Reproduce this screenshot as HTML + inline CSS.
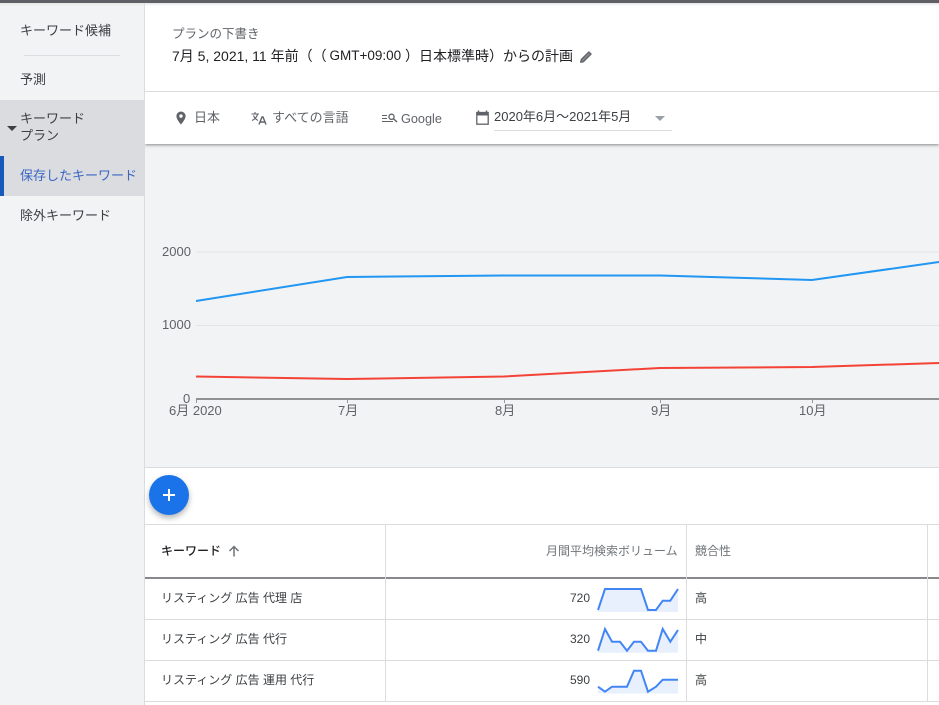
<!DOCTYPE html>
<html lang="ja">
<head>
<meta charset="utf-8">
<style>
html,body{margin:0;padding:0}
body{width:939px;height:705px;overflow:hidden;position:relative;background:#f1f3f4;font-family:"Liberation Sans","Noto Sans CJK JP",sans-serif;color:#3c4043;text-spacing-trim:space-all}
.t{position:absolute;white-space:nowrap;font-size:13px;line-height:18px}
.b{position:absolute}
svg{position:absolute;overflow:visible}
</style>
</head>
<body>
<div class="b" style="left:145px;top:0;width:794px;height:144px;background:#fff;box-shadow:0 1px 3px rgba(60,64,67,.6);clip-path:inset(0 0 -6px 0)"></div>
<div class="b" style="left:144px;top:0;width:1px;height:705px;background:#dadce0"></div>
<div class="b" style="left:0;top:0;width:939px;height:3px;background:#5f6065"></div>
<div class="b" style="left:0;top:3px;width:939px;height:3px;background:linear-gradient(#e4e4e4,rgba(255,255,255,0))"></div>

<!-- Sidebar -->
<div class="b" style="left:0;top:100px;width:144px;height:96px;background:#dadce0"></div>
<div class="b" style="left:0;top:156px;width:4px;height:40px;background:#185abc"></div>
<div class="b" style="left:24px;top:55px;width:96px;height:1px;background:#dadce0"></div>
<div class="t" style="left:20px;top:22px">キーワード候補</div>
<div class="t" style="left:20px;top:71px">予測</div>
<div class="t" style="left:20px;top:110px;line-height:17px">キーワード<br>プラン</div>
<svg style="left:7px;top:126px" width="10" height="6"><path d="M0 0H10L5 5Z" fill="#3c4043"/></svg>
<div class="t" style="left:20px;top:167px;color:#3b66c4">保存したキーワード</div>
<div class="t" style="left:20px;top:207px">除外キーワード</div>

<!-- Header -->
<div class="t" style="left:172px;top:25px;font-size:12.500px;color:#5f6368">プランの下書き</div>
<div class="t" style="left:172px;top:47px;font-size:14px;color:#202124">7月 5, 2021, 11 年前（（</div>
<div class="t" style="left:329.500px;top:47px;font-size:13.500px;color:#202124">GMT+09:00</div>
<div class="t" style="left:405px;top:47px;font-size:14px;color:#202124">）日本標準時）からの計画</div>
<svg style="left:579px;top:50px" width="14" height="14" viewBox="0 0 14 14"><path d="M1.700 12.300l.6-2.800L9.900 1.900 12.100 4.100 4.500 11.700z" fill="#85888c" stroke="#5f6368" stroke-width="1.300" stroke-linejoin="round"/></svg>
<div class="b" style="left:145px;top:91px;width:794px;height:1px;background:#dadce0"></div>

<svg style="left:175px;top:111px" width="12" height="14" viewBox="0 0 12 14"><path fill-rule="evenodd" d="M6 .5A4.600 4.600 0 0 0 1.400 5.100C1.400 8.300 6 13.500 6 13.500S10.600 8.300 10.600 5.100A4.600 4.600 0 0 0 6 .5ZM6 3.400A1.700 1.700 0 1 1 6 6.800 1.700 1.700 0 0 1 6 3.400Z" fill="#5f6368"/></svg>
<div class="t" style="left:194px;top:109px;color:#5f6368">日本</div>

<svg style="left:251px;top:111px" width="16" height="14" viewBox="0 0 16 14"><path d="M.5 3H8M4 1V3M6.500 3C6 6 3.500 8.500 1 9.500M2.500 4.500C3.500 7 5 8.500 7 9.500" fill="none" stroke="#5f6368" stroke-width="1.100"/><path d="M8 13.500L11 6H12L15 13.500M9.200 11H13.800" fill="none" stroke="#5f6368" stroke-width="1.400"/></svg>
<div class="t" style="left:272px;top:109px;color:#5f6368">すべての言語</div>

<svg style="left:382px;top:113px" width="16" height="10" viewBox="0 0 16 10"><path d="M0 2.500H5M0 5.500H5M0 8.500H11" stroke="#5f6368" stroke-width="1.100" fill="none"/><circle cx="9.500" cy="3.800" r="2.600" fill="none" stroke="#5f6368" stroke-width="1.300"/><path d="M11.500 5.800L15 9" stroke="#5f6368" stroke-width="1.400"/></svg>
<div class="t" style="left:401px;top:110px;font-size:12.700px;color:#5f6368">Google</div>

<svg style="left:476px;top:110px" width="13" height="15" viewBox="0 0 13 15"><path d="M2.500 .5V3M10.500 .5V3" stroke="#5f6368" stroke-width="1.500"/><rect x=".8" y="2.500" width="11.400" height="11.700" fill="none" stroke="#5f6368" stroke-width="1.300"/><rect x=".8" y="2.500" width="11.400" height="3" fill="#5f6368"/></svg>
<div class="t" style="left:494px;top:108px;font-size:13px;color:#3c4043">2020年6月～2021年5月</div>
<svg style="left:655px;top:116px" width="10" height="6"><path d="M0 0H10L5 5Z" fill="#9aa0a6"/></svg>
<div class="b" style="left:494px;top:130px;width:178px;height:1px;background:#dadce0"></div>

<!-- Chart -->
<svg style="left:0;top:0" width="939" height="470">
<path d="M196 252H939M196 325.500H939" stroke="#e3e4e6" stroke-width="1" fill="none"/>
<path d="M196 399H939" stroke="#919191" stroke-width="2" fill="none"/>
<path d="M196.500 399V403M347.500 399V403M504.500 399V403M660.500 399V403M812.500 399V403" stroke="#999" stroke-width="1"/>
<path d="M196 301L347 277 504 275.500 660 275.500 812 280 939 262" fill="none" stroke="#2196f3" stroke-width="2"/>
<path d="M196 376.500L347 379 504 376.500 660 368 812 367 939 363" fill="none" stroke="#f44336" stroke-width="2"/>
</svg>
<div class="t" style="left:162px;top:243px;color:#5f6368">2000</div>
<div class="t" style="left:162px;top:316px;color:#5f6368">1000</div>
<div class="t" style="left:183px;top:390px;color:#5f6368">0</div>
<div class="t" style="left:169px;top:402px;font-size:13px;color:#5f6368">6月 2020</div>
<div class="t" style="left:338px;top:402px;font-size:13px;color:#5f6368">7月</div>
<div class="t" style="left:495px;top:402px;font-size:13px;color:#5f6368">8月</div>
<div class="t" style="left:651px;top:402px;font-size:13px;color:#5f6368">9月</div>
<div class="t" style="left:799px;top:402px;font-size:13px;color:#5f6368">10月</div>

<!-- Table area -->
<div class="b" style="left:145px;top:467px;width:794px;height:238px;background:#fff;border-top:1px solid #dadce0;box-sizing:border-box"></div>
<div class="b" style="left:145px;top:524px;width:794px;height:1px;background:#dadce0"></div>
<div class="b" style="left:145px;top:577px;width:794px;height:2px;background:#88898c"></div>
<div class="b" style="left:145px;top:619px;width:794px;height:1px;background:#dadce0"></div>
<div class="b" style="left:145px;top:660px;width:794px;height:1px;background:#dadce0"></div>
<div class="b" style="left:145px;top:701px;width:794px;height:1px;background:#dadce0"></div>
<div class="b" style="left:385px;top:525px;width:1px;height:176px;background:#dadce0"></div>
<div class="b" style="left:686px;top:525px;width:1px;height:176px;background:#dadce0"></div>
<div class="b" style="left:927px;top:525px;width:1px;height:176px;background:#dadce0"></div>

<div class="b" style="left:149px;top:475px;width:40px;height:40px;border-radius:50%;background:#1a73e8;box-shadow:0 3px 6px rgba(60,64,67,.4)"></div>
<svg style="left:162px;top:488px" width="14" height="14"><path d="M7 1V13M1 7H13" stroke="#fff" stroke-width="2"/></svg>

<div class="t" style="left:161px;top:542px;font-size:12px;font-weight:500;color:#202124">キーワード</div>
<svg style="left:228px;top:545px" width="12" height="12" viewBox="0 0 12 12"><path d="M6 11.500V1.500M1.500 6L6 1.500 10.500 6" fill="none" stroke="#6f7276" stroke-width="1.500"/></svg>
<div class="t" style="left:546px;top:542px;font-size:12px;color:#70757a">月間平均検索ボリューム</div>
<div class="t" style="left:695px;top:542px;font-size:12px;color:#70757a">競合性</div>

<div class="t" style="left:161px;top:589px;font-size:12px;color:#3c4043">リスティング 広告 代理 店</div>
<div class="t" style="left:161px;top:630px;font-size:12px;color:#3c4043">リスティング 広告 代行</div>
<div class="t" style="left:161px;top:671px;font-size:12px;color:#3c4043">リスティング 広告 運用 代行</div>

<div class="t" style="left:570px;top:589px;font-size:12px;color:#3c4043">720</div>
<div class="t" style="left:570px;top:630px;font-size:12px;color:#3c4043">320</div>
<div class="t" style="left:570px;top:671px;font-size:12px;color:#3c4043">590</div>

<svg style="left:0;top:0" width="939" height="705">
<path d="M598 610L605 589 641 589 648 610 656 610 662.700 600.700 670.300 600.700 678 589V612H598Z" fill="#e8f0fe"/>
<path d="M598 610L605 589 641 589 648 610 656 610 662.700 600.700 670.300 600.700 678 589" fill="none" stroke="#4285f4" stroke-width="2"/>
<path d="M598 650.700L605 629 612 641.700 620 641.700 627 650.700 634 641.700 641 641.700 648 650.700 656 650.700 662.700 629 670.300 641.700 678 630V652.700H598Z" fill="#e8f0fe"/>
<path d="M598 650.700L605 629 612 641.700 620 641.700 627 650.700 634 641.700 641 641.700 648 650.700 656 650.700 662.700 629 670.300 641.700 678 630" fill="none" stroke="#4285f4" stroke-width="2"/>
<path d="M598 686.700L605 691.700 612 686.700 620 686.700 627 686.700 634 670.700 641 670.700 648 691.700 656 686.700 662.700 679.700 670.300 679.700 678 679.700V693.500H598Z" fill="#e8f0fe"/>
<path d="M598 686.700L605 691.700 612 686.700 620 686.700 627 686.700 634 670.700 641 670.700 648 691.700 656 686.700 662.700 679.700 670.300 679.700 678 679.700" fill="none" stroke="#4285f4" stroke-width="2"/>
</svg>

<div class="t" style="left:695px;top:589px;font-size:12px;color:#3c4043">高</div>
<div class="t" style="left:695px;top:630px;font-size:12px;color:#3c4043">中</div>
<div class="t" style="left:695px;top:671px;font-size:12px;color:#3c4043">高</div>
</body>
</html>
